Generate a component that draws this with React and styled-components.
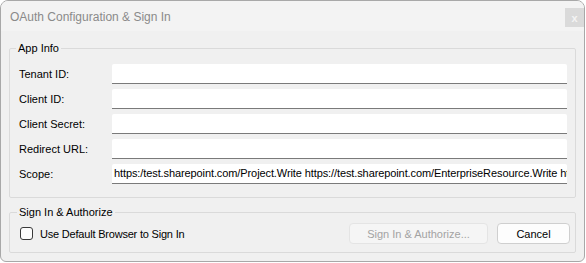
import React from "react";
import styled, { createGlobalStyle } from "styled-components";

const GlobalStyle = createGlobalStyle`
    html, body {
        margin: 0;
        padding: 0;
        background: #ffffff;
        font-family: "Liberation Sans", Arial, sans-serif;
    }
`

const Window = styled.div`
    box-sizing: border-box;
    width: 585px;
    height: 262px;
    border: 1px solid #a8a8a8;
    border-radius: 8px 8px 6px 6px;
    background: #f0f0f0;
    overflow: hidden;
    display: flex;
    flex-direction: column;
`
const TitleBar = styled.div`
    height: 30px;
    flex-shrink: 0;
    background: #f3f3f3;
    display: flex;
    flex-direction: row;
    justify-content: space-between;
    align-items: flex-start;
`
const Title = styled.div`
    font-size: 12px;
    color: #8a8a8a;
    padding: 9px 0 0 9px;
`
const CloseButton = styled.div`
    width: 19px;
    height: 19px;
    margin-top: 7px;
    background: #dadada;
    color: #f4f4f4;
    font-size: 11px;
    font-weight: bold;
    display: flex;
    align-items: center;
    justify-content: center;
`
const Body = styled.div`
    display: flex;
    flex-direction: column;
    gap: 8px;
    padding: 11px 8px 0 8px;
`
const Group = styled.fieldset`
    margin: 0;
    border: 1px solid #dadada;
    border-radius: 2px;
    padding: ${props => props.$pad};
    min-width: 0;
`
const Legend = styled.legend`
    font-size: 11px;
    line-height: 13px;
    padding: 0 2px;
    margin-left: -3px;
    color: #000;
`
const Form = styled.div`
    display: grid;
    grid-template-columns: 93px 1fr;
    row-gap: 5px;
    align-items: center;
`
const Label = styled.label`
    font-size: 11px;
    color: #000;
`
const Field = styled.div`
    box-sizing: border-box;
    height: 20px;
    background: #ffffff;
    border-bottom: 1px solid #7a7a7a;
    border-radius: 2px 2px 0 0;
    font-size: 11px;
    letter-spacing: -0.1px;
    line-height: 19px;
    padding-left: 2px;
    white-space: nowrap;
    overflow: hidden;
    color: #000;
`
const ActionRow = styled.div`
    display: flex;
    flex-direction: row;
    align-items: center;
`
const CheckLabel = styled.label`
    display: flex;
    align-items: center;
    gap: 7px;
    font-size: 11px;
    letter-spacing: -0.2px;
    color: #000;
    flex: 1;
`
const Box = styled.span`
    box-sizing: border-box;
    width: 13px;
    height: 13px;
    border: 1px solid #3a3a3a;
    border-radius: 3px;
    background: #fdfdfd;
`
const Button = styled.button`
    box-sizing: border-box;
    height: 21px;
    width: ${props => props.$w}px;
    margin-left: 9px;
    font-family: "Liberation Sans", Arial, sans-serif;
    font-size: 11px;
    border-radius: 4px;
    border: 1px solid ${props => props.disabled ? "#e4e4e4" : "#cfcfcf"};
    background: ${props => props.disabled ? "#f5f5f5" : "#fdfdfd"};
    color: ${props => props.disabled ? "#a3a3a3" : "#000"};
    padding: 0;
`

const fields = [
    {label: "Tenant ID:", value: ""},
    {label: "Client ID:", value: ""},
    {label: "Client Secret:", value: ""},
    {label: "Redirect URL:", value: ""},
    {label: "Scope:", value: "https:/test.sharepoint.com/Project.Write https://test.sharepoint.com/EnterpriseResource.Write https://test.sharepoint.com/ProjectWebAppReporting.Read"},
]

const App = () => {
    return(
        <>
            <GlobalStyle />
            <Window>
                <TitleBar>
                    <Title>OAuth Configuration &amp; Sign In</Title>
                    <CloseButton>x</CloseButton>
                </TitleBar>
                <Body>
                    <Group $pad="9px 8px 13px 9px">
                        <Legend>App Info</Legend>
                        <Form>
                            {fields.map(f => (
                                <React.Fragment key={f.label}>
                                    <Label>{f.label}</Label>
                                    <Field>{f.value}</Field>
                                </React.Fragment>
                            ))}
                        </Form>
                    </Group>
                    <Group $pad="4px 5px 8px 10px">
                        <Legend>Sign In &amp; Authorize</Legend>
                        <ActionRow>
                            <CheckLabel>
                                <Box />
                                Use Default Browser to Sign In
                            </CheckLabel>
                            <Button disabled $w={139}>Sign In &amp; Authorize...</Button>
                            <Button $w={73}>Cancel</Button>
                        </ActionRow>
                    </Group>
                </Body>
            </Window>
        </>
    )
}

export default App
